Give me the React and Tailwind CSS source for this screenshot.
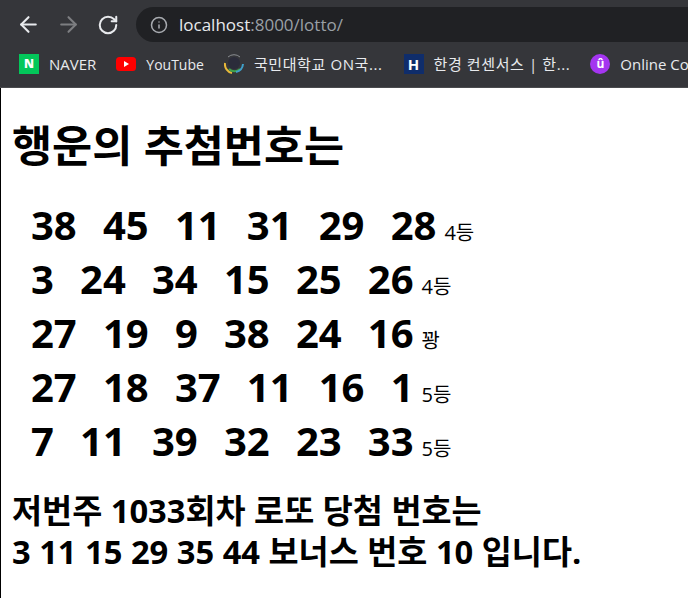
import { RotateCw, ArrowLeft, ArrowRight, Info } from 'lucide-react'

const FONT = 'font-["Open_Sans","Noto_Sans_CJK_KR",sans-serif]'

const rows = [
    { nums: [38, 45, 11, 31, 29, 28], result: '4등' },
    { nums: [3, 24, 34, 15, 25, 26], result: '4등' },
    { nums: [27, 19, 9, 38, 24, 16], result: '꽝' },
    { nums: [27, 18, 37, 11, 16, 1], result: '5등' },
    { nums: [7, 11, 39, 32, 23, 33], result: '5등' },
]

const Bookmark = ({ icon, label, className, textClass }) => (
    <div className={`flex items-center gap-[10px] shrink-0 ${className}`}>
        {icon}
        <span className={`text-[#e8eaed] whitespace-nowrap ${textClass}`}>{label}</span>
    </div>
)

const App = () => {
    return (
        <div className={`w-[688px] h-[598px] overflow-hidden bg-white text-black ${FONT}`}>
            {/* Browser chrome */}
            <div className="h-[88px] bg-[#35363a] overflow-hidden border-b border-[#4a4b4e]">
                <div className="h-[42px] pt-[7px] flex items-start">
                    <div className="flex items-center pl-[16px] gap-[15px] h-[35px] shrink-0">
                        <ArrowLeft size={25} strokeWidth={2} className="text-[#e8eaed]" />
                        <ArrowRight size={25} strokeWidth={2} className="text-[#7d7e81]" />
                        <RotateCw size={22} strokeWidth={2.2} className="text-[#e8eaed] ml-px" />
                    </div>
                    <div className="ml-[17px] flex-1 h-[35px] rounded-l-full bg-[#202124] flex items-center pl-[14px]">
                        <Info size={18} className="text-[#a8abb0]" />
                        <span className="ml-[11px] text-[17px] text-[#e8eaed]">
                            localhost<span className="text-[#9aa0a6]">:8000/lotto/</span>
                        </span>
                    </div>
                </div>
                <div className="h-[44px] flex items-center pl-[19px]">
                    <Bookmark
                        textClass="text-[15px]"
                        label="NAVER"
                        icon={<div className="size-[20px] bg-[#03c75a] text-white text-[12px] font-extrabold flex items-center justify-center">N</div>}
                    />
                    <Bookmark
                        className="ml-[20px]"
                        textClass="text-[14px]"
                        label="YouTube"
                        icon={
                            <svg width="20" height="14" viewBox="0 0 20 14">
                                <rect width="20" height="14" rx="3.5" fill="#f00" />
                                <path d="M8 4l5 3-5 3z" fill="#fff" />
                            </svg>
                        }
                    />
                    <Bookmark
                        className="ml-[20px]"
                        textClass="text-[15px] tracking-[0.6px]"
                        label="국민대학교 ON국..."
                        icon={
                            <svg width="20" height="20" viewBox="0 0 20 20" fill="none">
                                <circle cx="10" cy="9" r="6" fill="#2b2c3a" />
                                <path d="M1 9a9 9 0 0 0 7 10" stroke="#e9b93a" strokeWidth="2" />
                                <path d="M5 15c3 3 8 3 11 0" stroke="#3fa34d" strokeWidth="2" />
                                <path d="M12 18a9 9 0 0 0 7-8" stroke="#3fa0c9" strokeWidth="2" />
                                <path d="M4 3a9 9 0 0 1 12 0" stroke="#8a8d91" strokeWidth="1" />
                            </svg>
                        }
                    />
                    <Bookmark
                        className="ml-[21px]"
                        textClass="text-[15px] tracking-[0.6px]"
                        label="한경 컨센서스 | 한..."
                        icon={<div className="size-[20px] bg-[#0f2d6b] text-white text-[15px] font-bold flex items-center justify-center">H</div>}
                    />
                    <Bookmark
                        className="ml-[20px]"
                        textClass="text-[15px]"
                        label="Online Course"
                        icon={<div className="size-[20px] rounded-full bg-[#a435f0] text-white text-[12px] font-bold flex items-center justify-center">û</div>}
                    />
                </div>
            </div>

            {/* Page */}
            <div className="border-l border-black h-[510px] pl-[11px] pt-[32px]">
                <h1 className="text-[43.6px] font-bold leading-[50px]">행운의 추첨번호는</h1>
                <div className="mt-[28px] pl-[19px]">
                    {rows.map((row, i) => (
                        <div key={i} className="flex items-baseline h-[54px] leading-[54px]">
                            <div className="flex gap-[26.2px] text-[40px] font-bold">
                                {row.nums.map((n, j) => (
                                    <span key={j}>{n}</span>
                                ))}
                            </div>
                            <span className="ml-[8px] text-[20px]">{row.result}</span>
                        </div>
                    ))}
                </div>
                <p className="mt-[22px] text-[32.7px] font-bold leading-[41px]">
                    저번주 1033회차 로또 당첨 번호는
                    <br />
                    3 11 15 29 35 44 보너스 번호 10 입니다.
                </p>
            </div>
        </div>
    )
}

export default App
